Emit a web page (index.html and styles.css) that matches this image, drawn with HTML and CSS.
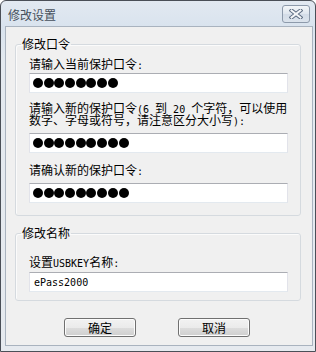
FILE: index.html
```html
<!DOCTYPE html>
<html>
<head>
<meta charset="utf-8">
<link rel="stylesheet" href="styles.css">
</head>
<body>
<div class="window">
  <div class="titlebar">
    <span class="title">修改设置</span>
    <div class="close">
      <svg width="14" height="10" viewBox="0 0 14 10">
        <path d="M2.5 1.5 L11.5 8.5 M11.5 1.5 L2.5 8.5" stroke="#5b6b80" stroke-width="4" stroke-linecap="square" fill="none"/>
        <path d="M2.5 1.5 L11.5 8.5 M11.5 1.5 L2.5 8.5" stroke="#f4f6f8" stroke-width="2" stroke-linecap="square" fill="none"/>
      </svg>
    </div>
  </div>
  <div class="client">
    <fieldset class="group g1">
      <legend>修改口令</legend>
      <div class="label l1">请输入当前保护口令<span class="lat">:</span></div>
      <div class="field f1"><span class="dots"><i></i><i></i><i></i><i></i><i></i><i></i><i></i><i></i></span></div>
      <div class="label l2">请输入新的保护口令<span class="lat">(6 </span>到<span class="lat"> 20 </span>个字符，可以使用<br>数字、字母或符号，请注意区分大小写<span class="lat">):</span></div>
      <div class="field f2"><span class="dots"><i></i><i></i><i></i><i></i><i></i><i></i><i></i><i></i><i></i></span></div>
      <div class="label l3">请确认新的保护口令<span class="lat">:</span></div>
      <div class="field f3"><span class="dots"><i></i><i></i><i></i><i></i><i></i><i></i><i></i><i></i><i></i></span></div>
    </fieldset>
    <fieldset class="group g2">
      <legend>修改名称</legend>
      <div class="label l4">设置<span class="lat">USBKEY</span>名称<span class="lat">:</span></div>
      <div class="field f4"><span class="value">ePass2000</span></div>
    </fieldset>
    <div class="buttons">
      <button class="btn">确定</button>
      <button class="btn">取消</button>
    </div>
  </div>
</div>
</body>
</html>
```

FILE: styles.css
```css
* { box-sizing: border-box; }
html, body { margin: 0; padding: 0; background: #ffffff; }
body {
  font-family: "Noto Sans CJK SC", "Noto Sans", sans-serif;
  font-size: 12px;
  color: #000;
}
.window {
  width: 316px;
  height: 352px;
  border: 1px solid #4a4f57;
  border-radius: 6px 6px 0 0;
  background: linear-gradient(#e2e9f1 0px, #d9e3ee 26px, #e3e9ef 60px, #e6eaef 100%);
  display: flex;
  flex-direction: column;
  overflow: hidden;
}
.titlebar {
  height: 25px;
  flex: none;
  display: flex;
  align-items: flex-start;
  justify-content: space-between;
  padding: 4px 5px 0 7px;
}
.title {
  line-height: 14px;
  margin-top: 3px;
  color: #46505c;
  font-size: 12px;
}
.close {
  width: 28px;
  height: 18px;
  border: 1px solid #8d9aab;
  border-radius: 3px;
  background: linear-gradient(#f3f6f9, #dfe6ee 50%, #d3dce7 51%, #dbe3ec);
  display: flex;
  align-items: center;
  justify-content: center;
}
.client {
  flex: 1;
  margin: 0 2px 5px 4px;
  background: #f0f0f0;
  border: 1px solid #a9b3bf;
  display: flex;
  flex-direction: column;
}
.group {
  margin: 0 11px 0 9px;
  border: 1px solid #d5dadf;
  border-radius: 3px;
  box-shadow: inset 1px 1px 0 #fbfbfb;
  padding: 8px 12px 12px 13px;
  min-width: 0;
}
.g1 { margin-top: 11px; }
.g2 { margin-top: 11px; padding-top: 17px; padding-bottom: 8px; }
legend {
  padding: 0 1px;
  margin-left: -8px;
  line-height: 12px;
  height: 12px;
}
.label {
  line-height: 12px;
  white-space: nowrap;
}
.lat {
  font-family: "DejaVu Sans Mono", "Liberation Mono", monospace;
  font-size: 10px;
  line-height: 0;
}
.l2 { margin-top: 9px; }
.l3 { margin-top: 11px; }
.field {
  height: 20px;
  margin-top: 3px;
  background: #ffffff;
  border: 1px solid #e2e3ea;
  border-top-color: #abadb3;
  border-bottom-color: #e3e9ef;
  display: flex;
  align-items: center;
  padding-left: 3px;
}
.f2, .f3 { margin-top: 7px; }
.f4 { margin-top: 4px; }
.dots { display: flex; gap: 0.7px; }
.dots i {
  display: block;
  width: 10px;
  height: 10px;
  border-radius: 50%;
  background: #000;
}
.value {
  font-family: "DejaVu Sans Mono", "Liberation Mono", monospace;
  font-size: 10px;
  padding-left: 1px;
}
.buttons {
  margin-top: 17px;
  display: flex;
  gap: 42px;
  padding-left: 58px;
}
.btn {
  width: 72px;
  height: 19px;
  margin: 0;
  padding: 0;
  font-family: "Noto Sans CJK SC", sans-serif;
  font-size: 12px;
  line-height: 12px;
  color: #000;
  border: 1px solid #707070;
  border-radius: 3px;
  background: linear-gradient(#f2f2f2 0%, #ebebeb 50%, #dddddd 51%, #cfcfcf 100%);
  box-shadow: inset 0 0 0 1px #fcfcfc;
}
```
